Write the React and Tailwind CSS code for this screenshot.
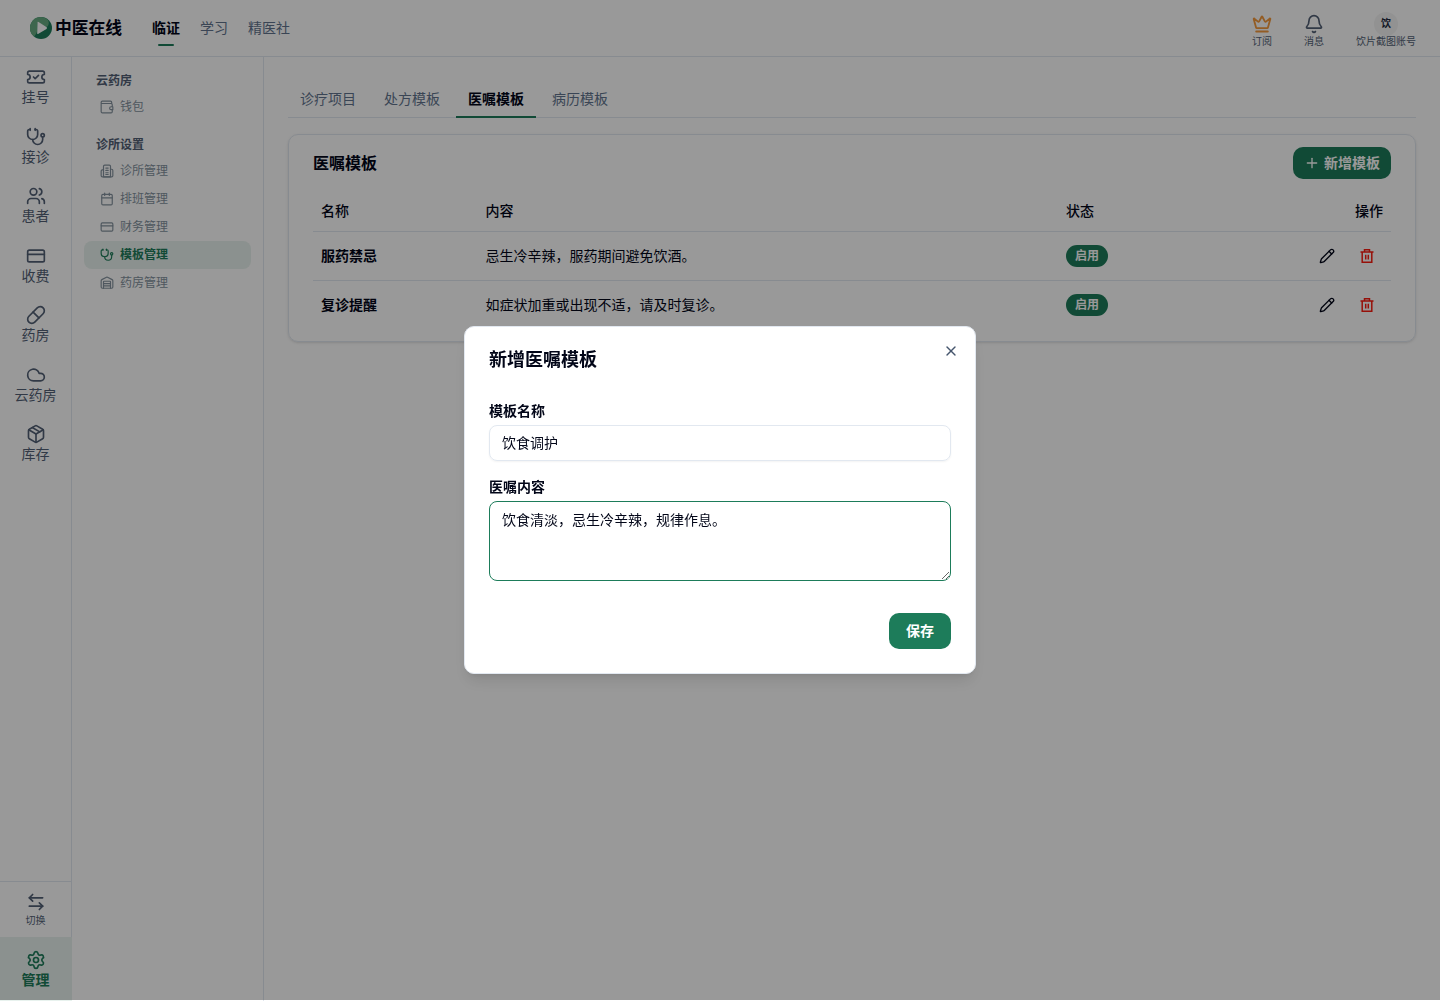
import {
  ArrowLeftRight, Bell, Calendar, Cloud, CreditCard, Crown, Package, Pencil, Pill,
  Plus, Settings, Stethoscope, TicketCheck, Users, Warehouse, X,
} from 'lucide-react';

const railItems = [
  { label: '挂号', icon: TicketCheck },
  { label: '接诊', icon: Stethoscope },
  { label: '患者', icon: Users },
  { label: '收费', icon: CreditCard },
  { label: '药房', icon: Pill },
  { label: '云药房', icon: Cloud },
  { label: '库存', icon: Package },
];

const menu = [
  { title: '云药房', items: [{ label: '钱包', icon: WalletIcon }] },
  {
    title: '诊所设置',
    items: [
      { label: '诊所管理', icon: ClinicIcon },
      { label: '排班管理', icon: Calendar },
      { label: '财务管理', icon: CreditCard },
      { label: '模板管理', icon: Stethoscope, active: true },
      { label: '药房管理', icon: Warehouse },
    ],
  },
];

const tabs = ['诊疗项目', '处方模板', '医嘱模板', '病历模板'];

const templates = [
  { name: '服药禁忌', content: '忌生冷辛辣，服药期间避免饮酒。' },
  { name: '复诊提醒', content: '如症状加重或出现不适，请及时复诊。' },
];

function WalletIcon({ className }) {
  return (
    <svg className={className} viewBox="0 0 24 24" fill="none" stroke="currentColor" strokeWidth="2" strokeLinecap="round" strokeLinejoin="round">
      <path d="M21 11V8a2 2 0 0 0-2-2H2V4a2 2 0 0 1 2-2h14a2 2 0 0 1 2 2v2M2 5v15a2 2 0 0 0 2 2h15a2 2 0 0 0 2-2v-3" />
      <path d="M22 11.5h-3a2.5 2.5 0 0 0 0 5h3z" />
    </svg>
  );
}

function ClinicIcon({ className }) {
  return (
    <svg className={className} viewBox="0 0 24 24" fill="none" stroke="currentColor" strokeWidth="2" strokeLinecap="round" strokeLinejoin="round">
      <path d="M6 22V4a2 2 0 0 1 2-2h8a2 2 0 0 1 2 2v18Z" />
      <path d="M6 10H4a2 2 0 0 0-2 2v8a2 2 0 0 0 2 2h16a2 2 0 0 0 2-2v-9a2 2 0 0 0-2-2h-2" />
      <path d="M10 7h4M10 11h4M10 15h4M10 18h4" />
    </svg>
  );
}

function TrashIcon() {
  return (
    <svg className="size-4" viewBox="0 0 16 16" fill="none" stroke="currentColor" strokeWidth="1.5">
      <path d="M1.5 4h13M5.5 4V1.7h5V4M3.2 4v10.3h9.6V4M6.7 6.8v4.7M9.3 6.8v4.7" />
    </svg>
  );
}

function Logo() {
  return (
    <svg className="size-[22px]" viewBox="0 0 22 22">
      <circle cx="11" cy="11" r="11" fill="#1d7c5a" />
      <path d="M11 0A11 11 0 0 0 4 19.5Q7 17 7.5 12V5.5L17 10Q20 7 18 3Q15 0 11 0Z" fill="#67ab80" />
      <path d="M7.5 5.5Q7.5 4.5 8.5 5L16.5 10Q17.5 11 16.5 12L8 17Q7 17.4 7.2 16Z" fill="#fff" />
    </svg>
  );
}

function Header() {
  return (
    <header className="flex h-[57px] shrink-0 items-center border-b border-slate-200 pl-[30px] pr-6">
      <div className="flex items-center gap-[3px]">
        <Logo />
        <span className="w-17 text-[16.8px] leading-6 font-semibold">中医在线</span>
      </div>
      <nav className="ml-[29px] flex gap-5 text-sm text-slate-500">
        <span className="relative font-semibold text-slate-950">
          临证
          <i className="absolute -bottom-2 left-1.5 h-0.5 w-4 rounded-full bg-[#1d7c5a]" />
        </span>
        <span>学习</span>
        <span>精医社</span>
      </nav>
      <div className="ml-auto flex items-center pt-1.5 text-[10px] leading-[15px] text-[#526075]">
        <div className="flex w-[52px] flex-col items-center">
          <Crown className="size-5 text-[#f59a3c]" strokeWidth={2.2} />
          <span>订阅</span>
        </div>
        <div className="flex w-[52px] flex-col items-center">
          <Bell className="size-5" />
          <span>消息</span>
        </div>
        <div className="ml-4 flex flex-col items-center">
          <span className="-mt-0.5 mb-[-2px] flex size-6 items-center justify-center rounded-full bg-[#f3f4f4] font-semibold text-slate-800">饮</span>
          <span>饮片截图账号</span>
        </div>
      </div>
    </header>
  );
}

function Rail() {
  return (
    <aside className="flex w-[72px] shrink-0 flex-col border-r border-slate-200 text-sm text-[#526075]">
      {railItems.map(({ label, icon: Icon }) => (
        <div key={label} className="flex flex-col items-center gap-px pt-2.5 pb-[11px] leading-[17.5px]">
          <Icon className="size-5" />
          <span>{label}</span>
        </div>
      ))}
      <div className="mt-auto flex h-14 flex-col items-center border-t border-slate-200 pt-2.5 text-[10px] leading-[15px]">
        <ArrowLeftRight className="size-5" />
        <span className="mt-px">切换</span>
      </div>
      <div className="-mr-px flex h-16 flex-col items-center gap-px bg-[#e8f2ee] pt-[13px] leading-[17.5px] font-semibold text-[#1d7c5a]">
        <Settings className="size-5" />
        <span className="pr-px">管理</span>
      </div>
    </aside>
  );
}

function SideMenu() {
  return (
    <aside className="flex w-48 shrink-0 flex-col gap-3 border-r border-slate-200 p-3 text-xs">
      {menu.map((group) => (
        <div key={group.title}>
          <div className="h-6 px-3 leading-6 font-semibold text-[#526075]">{group.title}</div>
          {group.items.map(({ label, icon: Icon, active }) => (
            <div
              key={label}
              className={
                active
                  ? 'flex h-7 items-center gap-1.5 rounded-lg bg-[#e8f2ee] px-4 font-semibold text-[#1d7c5a]'
                  : 'flex h-7 items-center gap-1.5 px-4 text-[#84929e]'
              }
            >
              <Icon className="size-3.5" />
              <span>{label}</span>
            </div>
          ))}
        </div>
      ))}
    </aside>
  );
}

function TemplateTable() {
  return (
    <table className="mt-3 w-full table-fixed text-left text-sm">
      <colgroup>
        <col className="w-[164.5px]" />
        <col className="w-[580.5px]" />
        <col className="w-[120px]" />
        <col />
      </colgroup>
      <thead>
        <tr className="h-10 border-b border-slate-200">
          <th className="px-2 font-medium">名称</th>
          <th className="px-2 font-medium">内容</th>
          <th className="px-2 font-medium">状态</th>
          <th className="px-2 text-right font-medium">操作</th>
        </tr>
      </thead>
      <tbody>
        {templates.map((item) => (
          <tr key={item.name} className="h-[49px] border-b border-slate-200 last:border-0">
            <td className="px-2 font-semibold">{item.name}</td>
            <td className="px-2">{item.content}</td>
            <td className="px-2">
              <span className="flex h-[22px] w-[42px] items-center justify-center rounded-full bg-[#1d7c5a] text-xs font-semibold text-white">启用</span>
            </td>
            <td className="px-2">
              <div className="flex justify-end gap-2">
                <button className="flex size-8 items-center justify-center"><Pencil className="size-4" /></button>
                <button className="flex size-8 items-center justify-center text-[#fb1c10]"><TrashIcon /></button>
              </div>
            </td>
          </tr>
        ))}
      </tbody>
    </table>
  );
}

function TemplateDialog() {
  return (
    <div className="fixed inset-x-0 top-0 flex h-[1000px] items-center justify-center bg-black/40">
      <div className="relative flex w-[512px] flex-col gap-4 rounded-[10px] border border-slate-200 bg-white p-6 shadow-lg">
        <h2 className="text-lg leading-none font-semibold">新增医嘱模板</h2>
        <X className="absolute top-4 right-4 size-4 text-slate-600" />
        <div className="flex flex-col gap-4 py-4 text-sm">
          <label className="flex flex-col gap-1">
            <span className="font-semibold">模板名称</span>
            <input className="h-9 rounded-lg border border-slate-200 px-3 pb-0.5 shadow-xs" defaultValue="饮食调护" />
          </label>
          <label className="flex flex-col gap-1">
            <span className="font-semibold">医嘱内容</span>
            <textarea className="h-20 rounded-lg border border-[#1d7c5a] px-3 py-2 outline-none" defaultValue="饮食清淡，忌生冷辛辣，规律作息。" />
          </label>
        </div>
        <button className="h-9 w-[62px] self-end rounded-[10px] bg-[#1d7c5a] text-sm font-semibold text-white">保存</button>
      </div>
    </div>
  );
}

export default function App() {
  return (
    <div className="flex h-[1001px] flex-col bg-white font-[Inter,'Noto_Sans_CJK_SC',sans-serif] text-slate-950">
      <Header />
      <div className="flex min-h-0 flex-1">
        <Rail />
        <SideMenu />
        <main className="flex-1 p-6">
          <div className="flex gap-1 border-b border-slate-200 text-sm">
            {tabs.map((tab) => (
              <span
                key={tab}
                className={
                  tab === '医嘱模板'
                    ? '-mb-px border-b-2 border-[#1d7c5a] px-3 pt-2 pb-[7px] font-semibold'
                    : 'px-3 py-2 text-slate-500'
                }
              >
                {tab}
              </span>
            ))}
          </div>
          <section className="mt-4 rounded-[10px] border border-slate-200 px-6 py-3 shadow-sm">
            <div className="flex items-center justify-between">
              <h1 className="text-base font-semibold">医嘱模板</h1>
              <button className="flex h-8 w-[98px] items-center justify-center gap-1 rounded-[10px] bg-[#1d7c5a] text-sm font-semibold text-white">
                <Plus className="size-4" />
                新增模板
              </button>
            </div>
            <TemplateTable />
          </section>
        </main>
      </div>
      <TemplateDialog />
    </div>
  );
}
